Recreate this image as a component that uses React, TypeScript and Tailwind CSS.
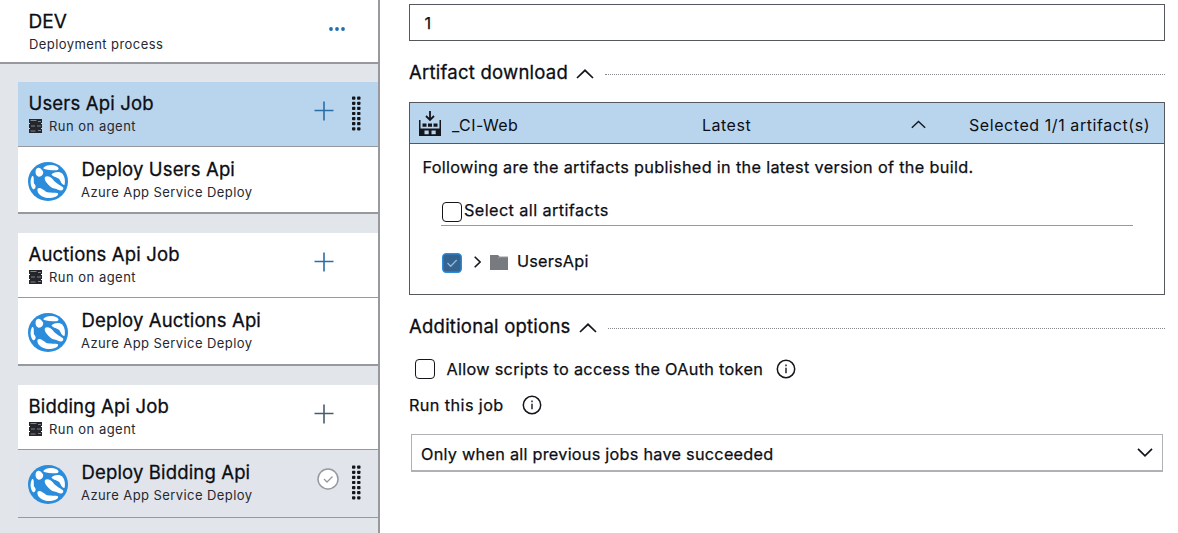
import type { ReactNode } from "react";

function AppServiceIcon() {
  return (
    <svg className="mt-[15px] ml-[10px] h-[39px] w-10 shrink-0" viewBox="0 0 40 40" preserveAspectRatio="none">
      <circle cx="20" cy="20" r="20" fill="#2b8cdb" />
      <g fill="#fff">
        <path d="M15.500 6C17 3 24 2 28 4C32 6 31 8.500 27 8.500C23 8.500 19 8.500 15.500 7Z" />
        <path d="M8.500 7C11 4.500 13 7 15 9.500C16 12.500 13 15.500 10.500 15C7 14 7 9 8.500 7Z" />
        <path d="M17 15.500C19 13.500 23 15 25 18C27 21.500 32 23.500 35 26C36.500 29 33 30 30 28.500C28 27.500 25 27.500 22.500 25.500C20 23 15.500 19 17 15.500Z" />
        <path d="M23.500 12.500C27 9.500 32 9.500 34.500 12C37 15 37.500 20 36.500 23.500C33 23.500 33 19 30.500 17C28 15 24.500 15 23.500 12.500Z" />
        <path d="M4 14.500C6.500 13.500 5.500 19 6 22C9 24.500 7.500 28 5 28C2 24 2 18 4 14.500Z" />
        <path d="M9.500 27.500C12 25.500 14.500 28 18 30.500C21.500 32 28 31 30 32C31 35 26 37 20 37C14 36.500 8.500 32.500 9.500 27.500Z" />
      </g>
    </svg>
  );
}

function AgentIcon() {
  return (
    <svg className="-mt-px h-[14px] w-[13px] shrink-0" viewBox="0 0 13 14">
      <path fill="#24262c" d="M0 0h13v4H0zM1 4h11v1H1zM0 5h13v4H0zM1 9h11v1H1zM0 10h13v4H0z" />
      <path stroke="#80838a" strokeWidth="1" d="M1.5 1.5h6M9 2.5h3M2 7h4M8 7h4M1.5 12h5M9 11.5h3" />
    </svg>
  );
}

function Plus({ dark }: { dark?: boolean }) {
  return (
    <svg className="h-5 w-5 shrink-0" viewBox="0 0 20 20">
      <path d="M10 .5v19M.5 9.5h19" stroke={dark ? "#4a5b70" : "#2a6ea6"} strokeWidth="1.6" />
    </svg>
  );
}

function Grip() {
  return (
    <svg className="h-[35px] w-[9px] shrink-0" viewBox="0 0 9 35">
      {[0, 1, 2, 3, 4, 5, 6].map((i) => (
        <g key={i} fill="#14161c">
          <rect x="0" y={0.6 + i * 5.1} width="3.4" height="3.2" rx=".8" />
          <rect x="5.1" y={0.6 + i * 5.1} width="3.4" height="3.2" rx=".8" />
        </g>
      ))}
    </svg>
  );
}

function ChevronUp({ className }: { className: string }) {
  return (
    <svg className={className} viewBox="0 0 18 10">
      <path d="M1 9 9 1.3 17 9" fill="none" stroke="#14161c" strokeWidth="1.7" />
    </svg>
  );
}

function Info() {
  return (
    <svg className="h-5 w-5 shrink-0" viewBox="0 0 20 20">
      <circle cx="10" cy="10" r="8.7" fill="none" stroke="#14161c" strokeWidth="1.5" />
      <path d="M10 8.8v5.4M10 5.6v1.6" stroke="#14161c" strokeWidth="1.4" />
    </svg>
  );
}

function Job({ name, className, dark, grip }: { name: string; className: string; dark?: boolean; grip?: boolean }) {
  return (
    <div className={`flex border-[#97999e] pt-[10px] pl-[11px] ${className}`}>
      <div className="w-[285px] leading-[23px]">
        <div className="-ml-[0.5px] text-[18.5px] tracking-[0.17px] [-webkit-text-stroke:0.3px]">{name}</div>
        <div className="flex items-center gap-[7px] text-[13px] tracking-[0.48px] text-[#26282f]">
          <AgentIcon />
          <span>Run on agent</span>
        </div>
      </div>
      <div className="mt-[9px]">
        <Plus dark={dark} />
      </div>
      {grip && <div className="mt-[4px] ml-[18px]"><Grip /></div>}
    </div>
  );
}

function Task({ name, className, children }: { name: string; className: string; children?: ReactNode }) {
  return (
    <div className={`flex border-[#97999e] ${className}`}>
      <AppServiceIcon />
      <div className="ml-[13px] w-[236px] pt-[11px] leading-[23px]">
        <div className="pl-[0.5px] text-[18.5px] tracking-[0.15px] [-webkit-text-stroke:0.3px]">{name}</div>
        <div className="text-[13px] tracking-[0.42px] text-[#26282f]">Azure App Service Deploy</div>
      </div>
      {children}
    </div>
  );
}

function Checkbox() {
  return <span className="box-border h-5 w-5 shrink-0 rounded-[4px] border-[1.5px] border-[#14161c]" />;
}

function SectionTitle({ text }: { text: string }) {
  return (
    <div className="flex h-6 items-center">
      <span className="-mt-[2px] text-[18.5px] leading-6 tracking-[0.24px] [-webkit-text-stroke:0.3px]">{text}</span>
      <ChevronUp className="mt-px ml-[8px] h-[10px] w-[18px] shrink-0" />
      <span className="mt-[3px] ml-[11px] flex-1 border-t border-dotted border-[#85878c]" />
    </div>
  );
}

export default function App() {
  return (
    <div className="flex h-[533px] w-[1178px] overflow-hidden bg-white font-['Inter',sans-serif] whitespace-nowrap text-[#0c0e14]">
      <aside className="box-border w-[380px] shrink-0 border-r-2 border-[#97999e] bg-[#e2e5ea]">
        <header className="box-border flex h-[64px] border-b-2 border-[#97999e] bg-white pt-[10px] pl-[29px] leading-[23px]">
          <div className="w-[300px]">
            <div className="-ml-[0.5px] text-[19px] [-webkit-text-stroke:0.3px]">DEV</div>
            <div className="text-[13px] tracking-[0.42px] text-[#26282f]">Deployment process</div>
          </div>
          <svg className="mt-[17px] h-[4px] w-[17px]" viewBox="0 0 17 4">
            <g fill="#1f6fb2">
              <circle cx="2" cy="2" r="1.9" />
              <circle cx="8" cy="2" r="1.9" />
              <circle cx="14" cy="2" r="1.9" />
            </g>
          </svg>
        </header>
        <div className="flex flex-col pt-[18px] pl-[18px]">
          <Job name="Users Api Job" className="h-[65px] border-b bg-[#b9d5ee]" grip />
          <Task name="Deploy Users Api" className="h-[67px] border-b-2 bg-white" />
          <Job name="Auctions Api Job" className="mt-[19px] h-[65px] border-b bg-white" />
          <Task name="Deploy Auctions Api" className="h-[68px] border-b-2 bg-white" />
          <Job name="Bidding Api Job" className="mt-[19px] h-[66px] border-b-2 bg-white" dark />
          <Task name="Deploy Bidding Api" className="-mt-px h-[68px] border-b bg-[#e1e5eb]">
            <svg className="mt-[18px] h-[22px] w-[22px] shrink-0" viewBox="0 0 22 22">
              <circle cx="11" cy="11" r="10" fill="#fff" stroke="#97999e" strokeWidth="1.5" />
              <path d="m7 11 3 3 5.5-5.5" fill="none" stroke="#97999e" strokeWidth="1.3" />
            </svg>
            <div className="mt-[15px] ml-[13px]"><Grip /></div>
          </Task>
        </div>
      </aside>

      <main className="w-[785px] pt-[4px] pl-[29px]">
        <div className="box-border flex h-[37px] items-center border border-[#55585f] pt-[2px] pl-[14.5px] text-[16.25px] [-webkit-text-stroke:0.25px]">1</div>
        <div className="mt-[20px]">
          <SectionTitle text="Artifact download" />
        </div>

        <section className="mt-[17px] box-border h-[193px] border border-[#55585f] text-[16.25px]">
          <div className="box-border flex h-[41px] items-center border-b border-[#55585f] bg-[#b9d5ee] pt-[3px] pl-[9px] text-[16px]">
            <svg className="-mt-[2px] h-[25px] w-[22px] shrink-0" viewBox="0 0 22 25">
              <path d="M11 0v8M7 5l4 4 4-4" fill="none" stroke="#14161c" strokeWidth="1.8" />
              <path fillRule="evenodd" fill="#14161c" d="M0 9h1.5v8.5h19V9H22v16H0zM5.500 19.500v3.800h4.200v-3.800zM12.500 19.500v3.800h4.200v-3.800z" />
              <path fill="#14161c" d="M3.500 12.500h4v3.200H3.500zM9 12.500h4v3.200H9zM14.500 12.500h4v3.200h-4z" />
            </svg>
            <span className="ml-[11px] w-[250px] tracking-[0.42px]">_CI-Web</span>
            <span className="w-[209px] tracking-[0.5px]">Latest</span>
            <ChevronUp className="h-[9px] w-[15px] shrink-0" />
            <span className="ml-[43px] tracking-[0.57px]">Selected 1/1 artifact(s)</span>
          </div>
          <p className="pt-[12px] pl-[12.5px] leading-[23px] tracking-[0.32px] [-webkit-text-stroke:0.25px]">Following are the artifacts published in the latest version of the build.</p>
          <div className="mr-[31px] ml-[31px] box-border flex h-[47px] items-start gap-[2px] border-b border-[#97999e] pt-[23px] pl-px">
            <Checkbox />
            <span className="-mt-[2px] leading-5 tracking-[0.4px] [-webkit-text-stroke:0.25px]">Select all artifacts</span>
          </div>
          <div className="mt-[26px] ml-[32px] flex h-[22px] items-center">
            <svg className="h-5 w-5 shrink-0" viewBox="0 0 20 20">
              <rect x=".7" y=".7" width="18.6" height="18.6" rx="3.5" fill="#35638f" stroke="#2b8cdb" strokeWidth="1.4" />
              <path d="m5.5 10 3.2 3.2 6-6.2" fill="none" stroke="#8fb9dd" strokeWidth="1.3" />
            </svg>
            <svg className="-mt-[2px] ml-[11.5px] h-[12px] w-[7px] shrink-0" viewBox="0 0 7 12">
              <path d="m.7.7 5.4 5.3L.7 11.3" fill="none" stroke="#14161c" strokeWidth="1.6" />
            </svg>
            <svg className="-mt-px ml-[9.5px] h-[15px] w-[18px] shrink-0" viewBox="0 0 18 15">
              <path d="M0 0h8l2 2h8v13H0z" fill="#777a7e" />
              <path d="M8 3.5 10 2h8" fill="none" stroke="#96989c" />
            </svg>
            <span className="-mt-[4px] ml-[9px] tracking-[0.2px] [-webkit-text-stroke:0.25px]">UsersApi</span>
          </div>
        </section>

        <div className="mt-[20px]">
          <SectionTitle text="Additional options" />
        </div>
        <div className="mt-[19px] flex h-[22px] items-center pl-[6px] text-[16.25px]">
          <Checkbox />
          <span className="mr-[13px] ml-[11.5px] tracking-[0.3px] [-webkit-text-stroke:0.25px]">Allow scripts to access the OAuth token</span>
          <Info />
        </div>
        <div className="mt-[13px] flex h-6 items-center gap-[18px] text-[16.25px]">
          <span className="tracking-[0.4px] [-webkit-text-stroke:0.25px]">Run this job</span>
          <Info />
        </div>
        <div className="mt-[17px] mr-[2px] ml-[2px] box-border flex h-[38px] items-center justify-between border border-b-2 border-[#b0b1b4] pt-[3px] pr-[9px] pl-[9px] text-[16.25px]">
          <span className="tracking-[0.26px] [-webkit-text-stroke:0.25px]">Only when all previous jobs have succeeded</span>
          <svg className="-mt-[4px] h-[9px] w-[16px]" viewBox="0 0 16 9">
            <path d="m1 .8 7 7 7-7" fill="none" stroke="#14161c" strokeWidth="1.7" />
          </svg>
        </div>
      </main>
    </div>
  );
}
